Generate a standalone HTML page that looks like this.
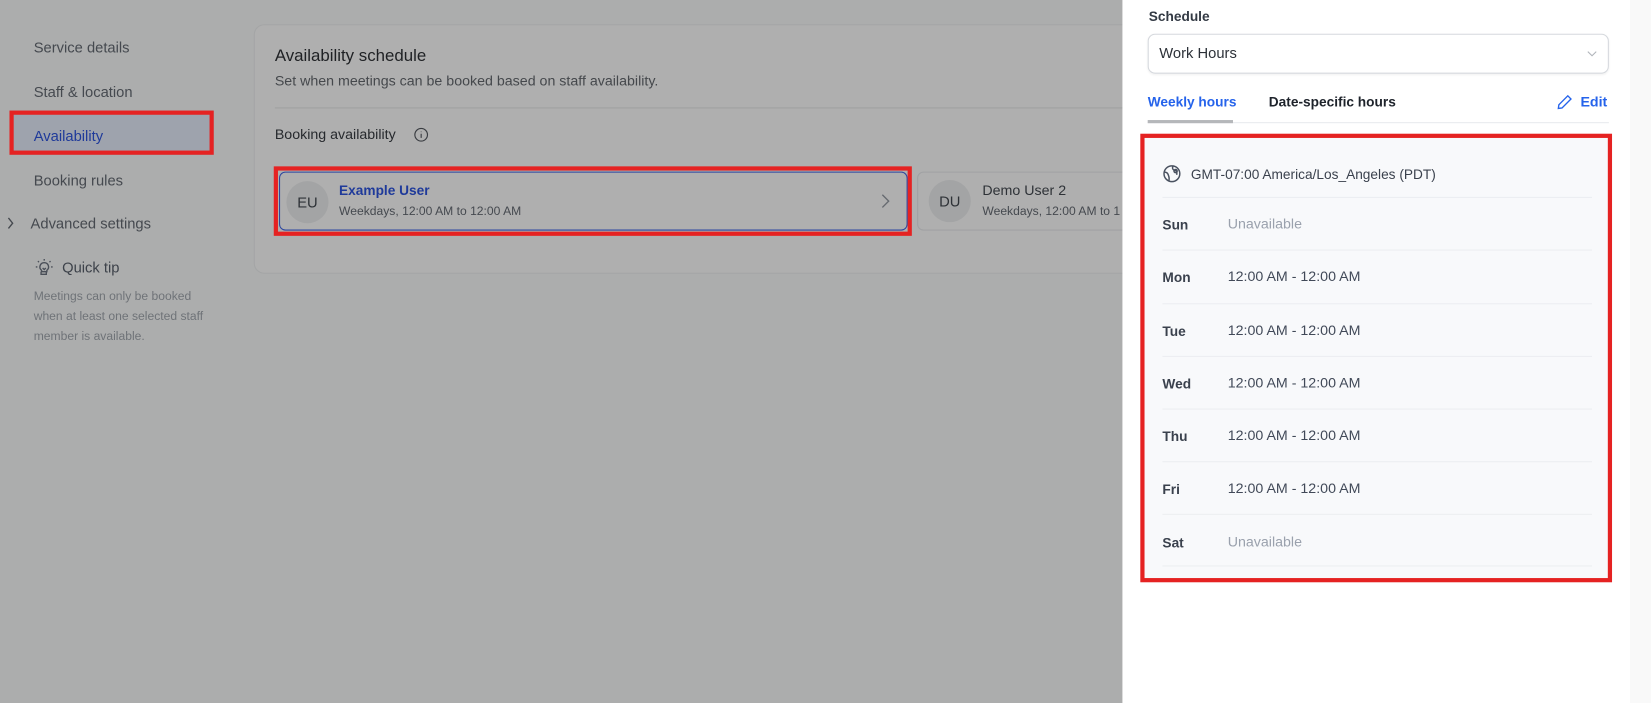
<!DOCTYPE html>
<html><head><meta charset="utf-8"><style>
*{box-sizing:border-box;margin:0;padding:0}
html,body{width:1651px;height:703px;overflow:hidden;background:#acadad}
#s{position:absolute;left:0;top:0;width:1568px;height:668px;transform:scale(1.05293);transform-origin:0 0;font-family:"Liberation Sans",sans-serif;background:#acadad}
.a{position:absolute;white-space:nowrap}
.nav{left:32px;font-size:14px;color:#45494f}
.row{position:absolute;left:1104px;width:408px;height:50px;border-top:1px solid #eceef1}
.d{position:absolute;left:0;font-size:13px;font-weight:bold;color:#3a414d}
.t{position:absolute;left:62px;font-size:13.5px;color:#414958}
.u{color:#9aa1ad}
</style></head><body><div id="s">
<div class="a nav" style="top:37px">Service details</div>
<div class="a nav" style="top:79px">Staff &amp; location</div>
<div class="a" style="left:9px;top:105px;width:194px;height:42px;background:#9ea3ad;border:4px solid #e52222"></div>
<div class="a nav" style="top:121px;color:#1f3a9a">Availability</div>
<div class="a nav" style="top:163px">Booking rules</div>
<svg class="a" style="left:6px;top:205px" width="8" height="14" viewBox="0 0 8 14" fill="none" stroke="#45494f" stroke-width="1.3"><path d="M2 2l4 5-4 5"/></svg>
<div class="a nav" style="left:29px;top:204px">Advanced settings</div>
<svg class="a" style="left:33px;top:245px" width="18" height="18" viewBox="0 0 18 18" fill="none" stroke="#4a4f58" stroke-width="1.3"><path d="M6 13v2.5h5V13M9 4.5a4 4 0 0 0-2.5 7.2V13h5v-1.3A4 4 0 0 0 9 4.5zM9 1v1.5M3 3l1 1M15 3l-1 1M1 8.5h1.5M15.5 8.5H17M7.5 9.5L9 11l1.5-1.5"/></svg>
<div class="a" style="left:59px;top:246px;font-size:14px;color:#3d424a">Quick tip</div>
<div class="a" style="left:32px;top:273px;font-size:11.5px;line-height:19px;color:#6f7378">Meetings can only be booked<br>when at least one selected staff<br>member is available.</div>

<div class="a" style="left:241px;top:23px;width:900px;height:237px;background:#afafaf;border:1px solid #a4a5a6;border-radius:10px"></div>
<div class="a" style="left:261px;top:45px;font-size:16px;color:#1f2124">Availability schedule</div>
<div class="a" style="left:261px;top:69px;font-size:13.5px;color:#45484c">Set when meetings can be booked based on staff availability.</div>
<div class="a" style="left:261px;top:102px;width:810px;height:1px;background:#9fa0a1"></div>
<div class="a" style="left:261px;top:120px;font-size:13.5px;color:#26292d">Booking availability</div>
<svg class="a" style="left:393px;top:121px" width="14" height="14" viewBox="0 0 14 14" fill="none" stroke="#3a3d42" stroke-width="1.1"><circle cx="7" cy="7" r="6"/><path d="M7 6v4M7 4v.5"/></svg>

<div class="a" style="left:260px;top:158px;width:606px;height:66px;border:4px solid #e52222"></div>
<div class="a" style="left:265px;top:163px;width:597px;height:56px;border:1px solid #2b45a0;border-radius:6px"></div>
<div class="a" style="left:272px;top:172px;width:40px;height:40px;border-radius:50%;background:#a3a4a5;font-size:14px;color:#2e3237;text-align:center;line-height:40px">EU</div>
<div class="a" style="left:322px;top:173px;font-size:13px;font-weight:bold;color:#1f3a9a">Example User</div>
<div class="a" style="left:322px;top:195px;font-size:11.5px;color:#45494f">Weekdays, 12:00 AM to 12:00 AM</div>
<svg class="a" style="left:836px;top:183px" width="10" height="16" viewBox="0 0 10 16" fill="none" stroke="#666a70" stroke-width="1.3"><path d="M2 2l6 6-6 6"/></svg>
<div class="a" style="left:871px;top:163px;width:250px;height:56px;border:1px solid #a0a1a3;border-radius:6px"></div>
<div class="a" style="left:882px;top:171px;width:40px;height:40px;border-radius:50%;background:#a3a4a5;font-size:14px;color:#2e3237;text-align:center;line-height:40px">DU</div>
<div class="a" style="left:933px;top:173px;font-size:13.5px;color:#2e3237">Demo User 2</div>
<div class="a" style="left:933px;top:195px;font-size:11.5px;color:#45494f">Weekdays, 12:00 AM to 1</div>

<div class="a" style="left:1066px;top:0;width:502px;height:668px;background:#fff"></div>
<div class="a" style="left:1548px;top:0;width:20px;height:668px;background:#f9f9f9"></div>
<div class="a" style="left:1091px;top:8px;font-size:13px;font-weight:bold;color:#333a44">Schedule</div>
<div class="a" style="left:1090px;top:32px;width:438px;height:38px;border:1px solid #d5d8dd;border-radius:7px;box-shadow:0 1px 2px rgba(0,0,0,.06)"></div>
<div class="a" style="left:1101px;top:42px;font-size:14px;color:#2c3138">Work Hours</div>
<svg class="a" style="left:1506px;top:46px" width="12" height="10" viewBox="0 0 12 10" fill="none" stroke="#b0b4ba" stroke-width="1"><path d="M2 3l4 4 4-4"/></svg>
<div class="a" style="left:1090px;top:89px;font-size:13px;font-weight:bold;color:#2563eb">Weekly hours</div>
<div class="a" style="left:1205px;top:89px;font-size:13px;font-weight:bold;color:#1e232b">Date-specific hours</div>
<svg class="a" style="left:1478px;top:89px" width="16" height="16" viewBox="0 0 16 16" fill="none" stroke="#2563eb" stroke-width="1.3"><path d="M11 2l3 3-8.5 8.5L2 14l.5-3.5z"/></svg>
<div class="a" style="left:1501px;top:89px;font-size:13.5px;color:#2563eb;font-weight:bold">Edit</div>
<div class="a" style="left:1090px;top:116px;width:438px;height:1px;background:#e8eaed"></div>
<div class="a" style="left:1090px;top:114px;width:81px;height:3px;background:#b5b7ba"></div>

<div class="a" style="left:1083px;top:127px;width:448px;height:426px;background:#f8f9fb;border:4px solid #e52222"></div>
<svg class="a" style="left:1104px;top:156px" width="18" height="18" viewBox="0 0 18 18" fill="none" stroke="#4a5260" stroke-width="1.4"><circle cx="9" cy="9" r="7.5"/><path d="M2 7.5c2 0 3 1 3.5 2.5S7 13 6 16M10 2c-1 2 0 3.5 2 4s2 2 1.5 4"/><circle cx="12.5" cy="6.5" r="1.5"/></svg>
<div class="a" style="left:1131px;top:158px;font-size:13px;color:#3a414d">GMT-07:00 America/Los_Angeles (PDT)</div>
<div class="row" style="top:187px"><div class="d" style="top:18px">Sun</div><div class="t u" style="top:17px">Unavailable</div></div>
<div class="row" style="top:237px"><div class="d" style="top:18px">Mon</div><div class="t" style="top:17px">12:00 AM - 12:00 AM</div></div>
<div class="row" style="top:288px"><div class="d" style="top:18px">Tue</div><div class="t" style="top:17px">12:00 AM - 12:00 AM</div></div>
<div class="row" style="top:338px"><div class="d" style="top:18px">Wed</div><div class="t" style="top:17px">12:00 AM - 12:00 AM</div></div>
<div class="row" style="top:388px"><div class="d" style="top:18px">Thu</div><div class="t" style="top:17px">12:00 AM - 12:00 AM</div></div>
<div class="row" style="top:438px"><div class="d" style="top:18px">Fri</div><div class="t" style="top:17px">12:00 AM - 12:00 AM</div></div>
<div class="row" style="top:488px;border-bottom:1px solid #eceef1"><div class="d" style="top:19px">Sat</div><div class="t u" style="top:18px">Unavailable</div></div>
</div></body></html>
